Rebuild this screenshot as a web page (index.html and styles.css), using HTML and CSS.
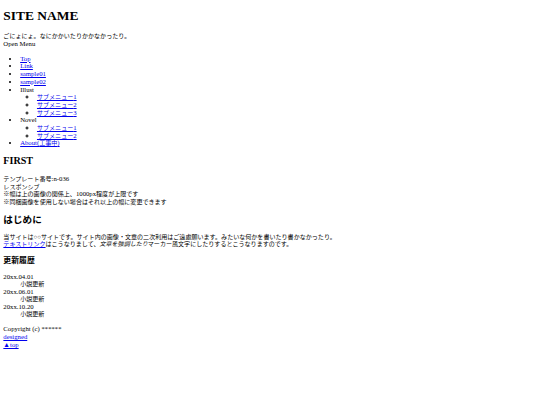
FILE: index.html
```html
<!DOCTYPE html>
<html>
<head>
<meta charset="utf-8">
<title>SITE NAME</title>
<link rel="stylesheet" href="styles.css">
</head>
<body>
<header class="site-header">
  <h1 class="site-title">SITE NAME</h1>
  <div class="site-desc ja">ごにょにょ。なにかかいたりかかなかったり。</div>
  <div class="menu-toggle">Open Menu</div>
  <nav class="global-nav">
    <ul>
      <li><a href="#">Top</a></li>
      <li><a href="#">Link</a></li>
      <li><a href="#">sample01</a></li>
      <li><a href="#">sample02</a></li>
      <li>Illust
        <ul>
          <li><a href="#"><span class="ja">サブメニュー</span>1</a></li>
          <li><a href="#"><span class="ja">サブメニュー</span>2</a></li>
          <li><a href="#"><span class="ja">サブメニュー</span>3</a></li>
        </ul>
      </li>
      <li>Novel
        <ul>
          <li><a href="#"><span class="ja">サブメニュー</span>1</a></li>
          <li><a href="#"><span class="ja">サブメニュー</span>2</a></li>
        </ul>
      </li>
      <li><a href="#">About(<span class="ja">工事中</span>)</a></li>
    </ul>
  </nav>
</header>
<main class="content">
  <section class="block">
    <h2>FIRST</h2>
    <p><span class="ja">テンプレート番号</span>:n-036<br><span class="ja">レスポンシブ</span><br><span class="ja">※幅は上の画像の関係上、</span>1000px<span class="ja">程度が上限です</span><br><span class="ja">※同梱画像を使用しない場合はそれ以上の幅に変更できます</span></p>
  </section>
  <section class="block">
    <h2 class="ja-head">はじめに</h2>
    <p class="ja">当サイトは○○サイトです。サイト内の画像・文章の二次利用はご遠慮願います。みたいな何かを書いたり書かなかったり。<br><a href="#">テキストリンク</a>はこうなりまして、<em>文章を強調したり</em>マーカー風文字にしたりするとこうなりますのです。</p>
    <h3>更新履歴</h3>
    <dl>
      <dt>20xx.04.01</dt><dd class="ja">小説更新</dd>
      <dt>20xx.06.01</dt><dd class="ja">小説更新</dd>
      <dt>20xx.10.20</dt><dd class="ja">小説更新</dd>
    </dl>
  </section>
</main>
<footer class="site-footer">
  <div class="copy">Copyright (c) ******</div>
  <div><a href="#">designed</a></div>
  <div><a href="#">▲top</a></div>
</footer>
</body>
</html>
```
FILE: styles.css
```css
body {
  margin: 3.36px;
  font-family: "Liberation Serif", "Noto Sans CJK JP", serif;
  font-size: 6.72px;
  line-height: 7.55px;
  color: #000;
  background: #fff;
}
a {
  color: #0000ee;
}
a,
em,
span {
  line-height: 1;
}
.ja {
  font-size: 6.05px;
}
h1 {
  font-size: 13.44px;
  line-height: 15.5px;
  margin: 5px 0 9px;
}
h2 {
  font-size: 10.08px;
  line-height: 11.6px;
  margin: 8.4px 0;
}
h2.ja-head {
  font-size: 9.6px;
}
h3 {
  font-size: 7.86px;
  line-height: 9px;
  margin: 7.4px 0 7.86px;
}
p,
dl,
ul {
  margin: 6.72px 0;
}
ul ul {
  margin: 0;
  list-style-type: circle;
}
ul {
  padding-left: 16.8px;
}
dd {
  margin-left: 16.8px;
}
.site-footer div {
  line-height: 8px;
}
```
